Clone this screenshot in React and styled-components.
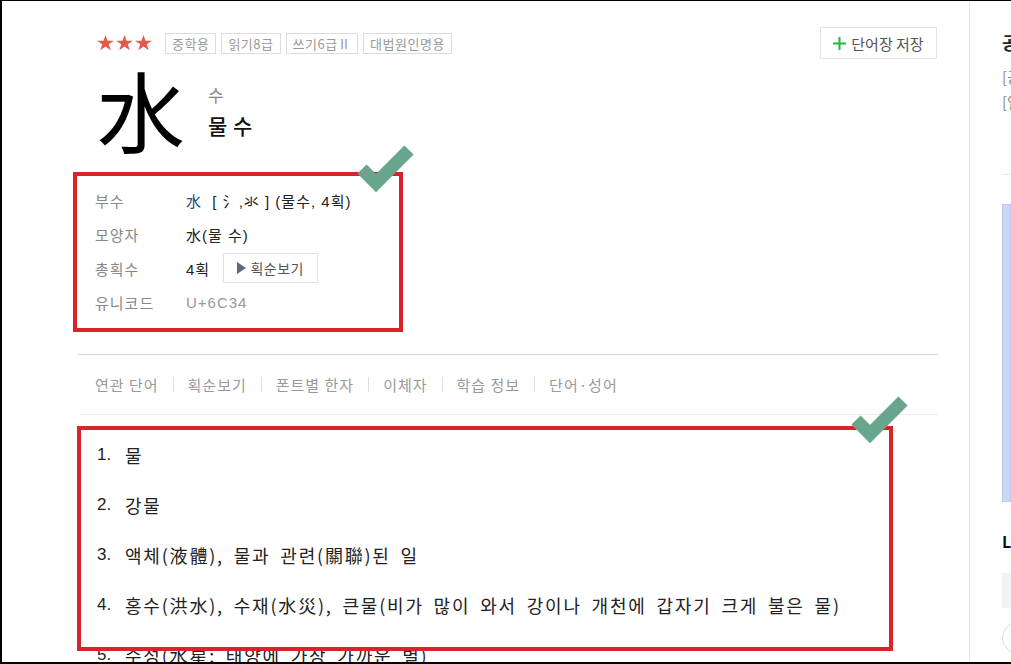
import React from "react";
import styled, { createGlobalStyle } from "styled-components";

const GlobalStyle = createGlobalStyle`
  body {
    margin: 0;
    background: #fff;
    font-family: "Noto Sans CJK KR", "Liberation Sans", sans-serif;
  }
`;

const Frame = styled.div`
  width: 1011px;
  height: 664px;
  box-sizing: border-box;
  border-left: 2px solid #000;
  border-top: 1px solid #000;
  border-bottom: 2px solid #000;
  display: flex;
  overflow: hidden;
  background: #fff;
`;

const Main = styled.main`
  width: 860px;
  flex-shrink: 0;
  margin-left: 76px;
  padding-top: 26px;
`;

const Header = styled.div`
  display: flex;
  align-items: center;
  justify-content: space-between;
  height: 32px;
`;

const Badges = styled.div`
  display: flex;
  align-items: center;
  padding-left: 19px;
`;

const Stars = styled.div`
  display: flex;
  gap: 2px;
  margin-right: 13px;
`;

const Tag = styled.span`
  height: 21px;
  box-sizing: border-box;
  border: 1px solid #dcdcdc;
  padding: 0 6px;
  margin-right: 5px;
  font-size: 13px;
  letter-spacing: 0.5px;
  line-height: 19px;
  color: #999;
`;

const SaveButton = styled.button`
  width: 117px;
  height: 32px;
  margin-right: 1px;
  border: 1px solid #e3e3e3;
  background: #fff;
  display: flex;
  align-items: center;
  justify-content: center;
  gap: 5px;
  font-family: inherit;
  font-size: 15px;
  color: #555;
  padding: 0;
`;

const HanjaBlock = styled.div`
  display: flex;
  margin-top: 5px;
  padding-left: 19px;
`;

const BigChar = styled.div`
  font-size: 88px;
  line-height: 88px;
  color: #000;
`;

const Reading = styled.div`
  margin-left: 23px;
  padding-top: 20px;
`;

const Sound = styled.div`
  font-size: 17px;
  line-height: 22px;
  color: #888;
`;

const Meaning = styled.div`
  margin-top: 6px;
  font-size: 21px;
  line-height: 26px;
  letter-spacing: 0.5px;
  font-weight: 500;
  color: #111;
`;

const InfoBox = styled.div`
  position: relative;
  width: 330px;
  box-sizing: border-box;
  margin: 20px 0 0 -5px;
  border: 4px solid #d8232a;
  padding: 7px 0 9px 18px;
`;

const InfoRow = styled.div`
  display: flex;
  align-items: center;
  height: 34px;
  font-size: 15px;
  letter-spacing: 1px;
`;

const Label = styled.span`
  width: 91px;
  color: #888;
`;

const Value = styled.span`
  color: ${(p) => (p.$muted ? "#999" : "#222")};
  font-family: "Liberation Sans", "Noto Sans CJK KR", sans-serif;
  white-space: pre;
`;

const Radical = styled.span`
  color: #21497a;
`;

const StrokeButton = styled.span`
  margin-left: 13px;
  width: 95px;
  height: 30px;
  box-sizing: border-box;
  border: 1px solid #e0e0e0;
  display: flex;
  align-items: center;
  justify-content: center;
  gap: 4px;
  font-size: 14px;
  letter-spacing: 0.5px;
  color: #555;
`;

const Play = styled.span`
  width: 0;
  height: 0;
  border-top: 6px solid transparent;
  border-bottom: 6px solid transparent;
  border-left: 9px solid #5b6a82;
`;

const Rule = styled.div`
  margin-top: 22px;
  height: 1px;
  background: #d4d4d4;
`;

const Tabs = styled.nav`
  display: flex;
  align-items: center;
  height: 59px;
  margin-left: 2px;
  padding-left: 15px;
  border-bottom: 1px solid #ececec;
`;

const Tab = styled.span`
  display: flex;
  align-items: center;
  font-size: 15px;
  letter-spacing: 1px;
  color: #999;
  & + &::before {
    content: "";
    width: 1px;
    height: 15px;
    background: #ddd;
    margin: 0 14px;
  }
`;

const MeaningList = styled.ol`
  position: relative;
  list-style: none;
  margin: 0;
  padding: 15px 0 0 0;
`;

const Item = styled.li`
  display: flex;
  height: 50px;
  align-items: center;
  font-size: 18px;
  letter-spacing: 1.8px;
  word-spacing: 4px;
  color: #222;
  white-space: nowrap;
`;

const Num = styled.span`
  width: 28px;
  padding-left: 19px;
  font-family: "Liberation Sans", sans-serif;
  font-size: 17px;
  letter-spacing: 0;
`;

const RedFrame = styled.div`
  position: absolute;
  left: -1px;
  top: 11px;
  width: 816px;
  height: 225px;
  box-sizing: border-box;
  border: 4px solid #d8232a;
  pointer-events: none;
`;

const CheckMark = styled.svg`
  position: absolute;
  left: ${(p) => p.$left}px;
  top: ${(p) => p.$top}px;
  z-index: 2;
`;

const Sidebar = styled.aside`
  flex: 1;
  margin-left: 31px;
  border-left: 1px solid #e5e5e5;
  padding-left: 32px;
  overflow: hidden;
  white-space: nowrap;
`;

const SideTitle = styled.div`
  margin-top: 29px;
  font-size: 18px;
  line-height: 24px;
  font-weight: 700;
  color: #222;
`;

const SideLinks = styled.div`
  margin-top: 10px;
  font-size: 15px;
  line-height: 25px;
  color: #888;
`;

const SideRule = styled.div`
  margin-top: 60px;
  height: 1px;
  background: #e8e8e8;
`;

const BlueBox = styled.div`
  margin-top: 29px;
  height: 298px;
  box-sizing: border-box;
  background: #ccd7f6;
  border: 1px solid #bcc8ec;
`;

const SideHeading = styled.div`
  margin-top: 28px;
  font-size: 16px;
  line-height: 22px;
  font-weight: 700;
  color: #111;
`;

const GreyBox = styled.div`
  margin-top: 21px;
  height: 35px;
  background: #f2f3f5;
`;

const Circle = styled.div`
  margin-top: 14px;
  width: 30px;
  height: 30px;
  border: 1px solid #ddd;
  border-radius: 50%;
`;

function Star() {
  return (
    <svg width="17" height="16" viewBox="0 0 24 23">
      <path
        d="M12 0l2.9 8.1H24l-7.3 5.3 2.8 8.6L12 16.7 4.5 22l2.8-8.6L0 8.1h9.1z"
        fill="#e35a4a"
      />
    </svg>
  );
}

function Check({ left, top }) {
  return (
    <CheckMark $left={left} $top={top} width="62" height="54" viewBox="0 0 62 54">
      <polyline
        points="6,24 20,38 53,5"
        fill="none"
        stroke="#68a58d"
        strokeWidth="13"
        strokeLinejoin="miter"
      />
    </CheckMark>
  );
}

const tags = ["중학용", "읽기8급", "쓰기6급Ⅱ", "대법원인명용"];
const tabs = ["연관 단어", "획순보기", "폰트별 한자", "이체자", "학습 정보", "단어·성어"];
const meanings = [
  "물",
  "강물",
  "액체(液體), 물과 관련(關聯)된 일",
  "홍수(洪水), 수재(水災), 큰물(비가 많이 와서 강이나 개천에 갑자기 크게 불은 물)",
  "수성(水星: 태양에 가장 가까운 별)",
];

export default function App() {
  return (
    <>
      <GlobalStyle />
      <Frame>
        <Main>
          <Header>
            <Badges>
              <Stars>
                <Star />
                <Star />
                <Star />
              </Stars>
              {tags.map((t) => (
                <Tag key={t}>{t}</Tag>
              ))}
            </Badges>
            <SaveButton>
              <svg width="13" height="13" viewBox="0 0 13 13">
                <path d="M6.5 0v13M0 6.5h13" stroke="#28b43c" strokeWidth="2" />
              </svg>
              단어장 저장
            </SaveButton>
          </Header>

          <HanjaBlock>
            <BigChar>水</BigChar>
            <Reading>
              <Sound>수</Sound>
              <Meaning>물 수</Meaning>
            </Reading>
          </HanjaBlock>

          <InfoBox>
            <InfoRow>
              <Label>부수</Label>
              <Value>
                <Radical>水</Radical>{"  [ 氵,氺 ] (물수, 4획)"}
              </Value>
            </InfoRow>
            <InfoRow>
              <Label>모양자</Label>
              <Value>水(물 수)</Value>
            </InfoRow>
            <InfoRow>
              <Label>총획수</Label>
              <Value>4획</Value>
              <StrokeButton>
                <Play />
                획순보기
              </StrokeButton>
            </InfoRow>
            <InfoRow>
              <Label>유니코드</Label>
              <Value $muted>U+6C34</Value>
            </InfoRow>
            <Check left={279} top={-31} />
          </InfoBox>

          <Rule />
          <Tabs>
            {tabs.map((t) => (
              <Tab key={t}>{t}</Tab>
            ))}
          </Tabs>

          <MeaningList>
            {meanings.map((m, i) => (
              <Item key={i}>
                <Num>{i + 1}.</Num>
                <span>{m}</span>
              </Item>
            ))}
            <RedFrame />
            <Check left={772} top={-19} />
          </MeaningList>
        </Main>

        <Sidebar>
          <SideTitle>공부 도우미</SideTitle>
          <SideLinks>
            <div>[공부] 한자 학습</div>
            <div>[열기] 모양자 보기</div>
          </SideLinks>
          <SideRule />
          <BlueBox />
          <SideHeading>Language</SideHeading>
          <GreyBox />
          <Circle />
        </Sidebar>
      </Frame>
    </>
  );
}
